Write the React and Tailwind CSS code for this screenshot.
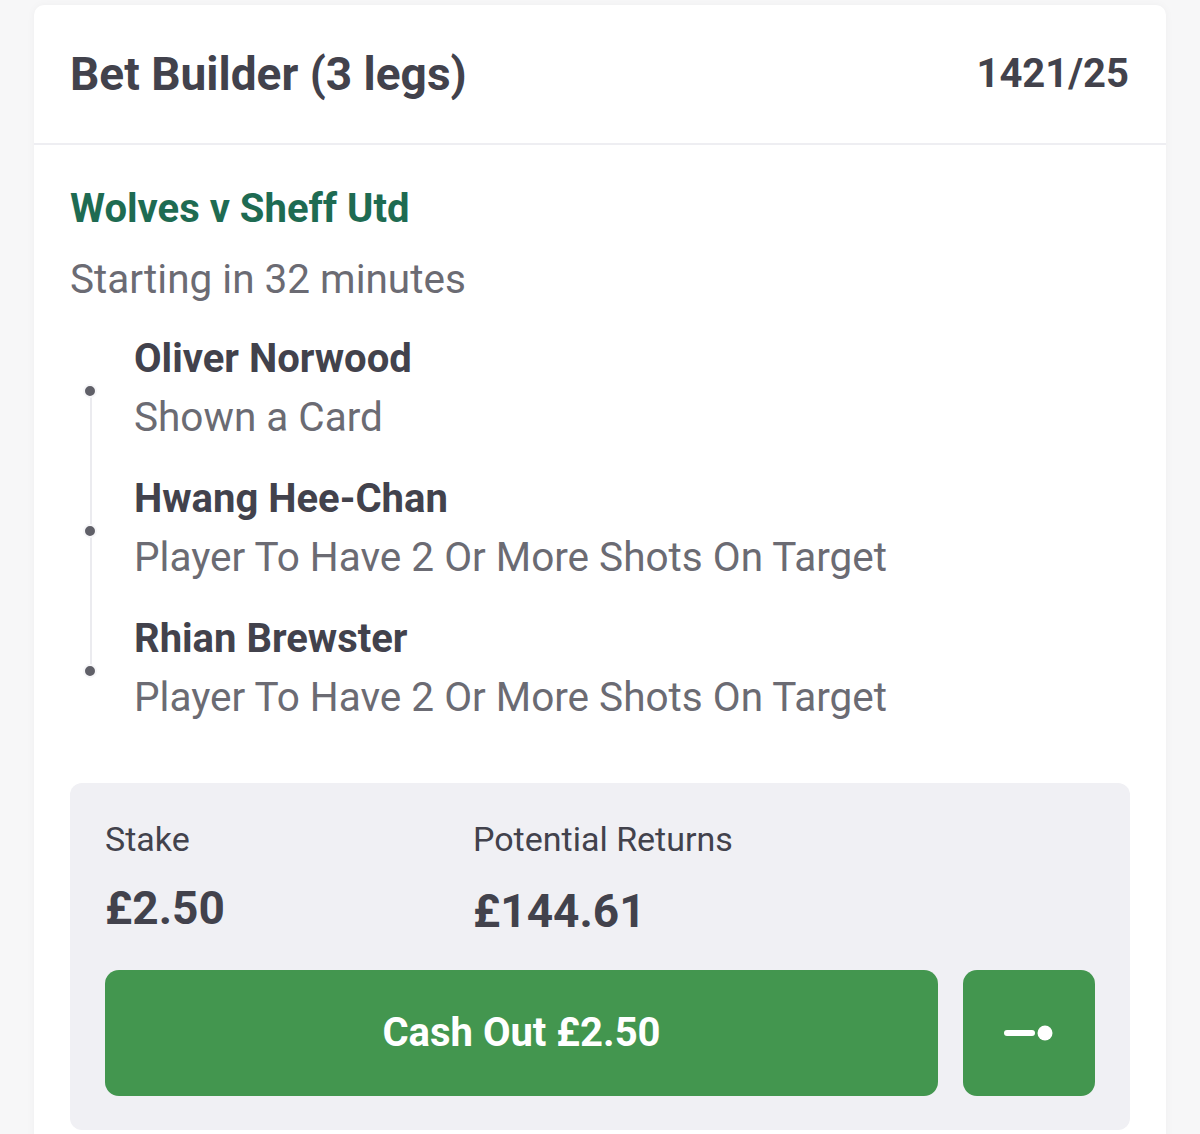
const legs = [
  { player: 'Oliver Norwood', market: 'Shown a Card' },
  { player: 'Hwang Hee-Chan', market: 'Player To Have 2 Or More Shots On Target' },
  { player: 'Rhian Brewster', market: 'Player To Have 2 Or More Shots On Target' },
];

const CashOutIcon = () => (
  <svg width="52" height="20" viewBox="0 0 52 20" fill="none">
    <line x1="4" y1="10" x2="29" y2="10" stroke="white" strokeWidth="6" strokeLinecap="round" />
    <circle cx="42" cy="10" r="7.5" fill="white" />
  </svg>
);

export default function App() {
  return (
    <div className="min-h-[1134px] bg-[#f7f7f8] px-[34px] pt-[5px] font-['Roboto',sans-serif] text-[#42424c]">
      <div className="rounded-t-[10px] bg-white shadow-[0_0_8px_rgba(0,0,0,0.04)]">
        {/* header */}
        <div className="flex h-[140px] items-center justify-between border-b-2 border-[#eeeef2] pl-[36px] pr-[37px]">
          <h1 className="text-[46px] font-bold leading-none">Bet Builder (3 legs)</h1>
          <span className="text-[40px] font-bold leading-none">1421/25</span>
        </div>

        <div className="px-[36px] pt-[39px] pb-[20px]">
          <p className="text-[40px] font-bold leading-[50px] text-[#1e6b52]">Wolves v Sheff Utd</p>
          <p className="mt-[20px] text-[40.5px] leading-[50px] text-[#6b6b73]">Starting in 32 minutes</p>

          {/* legs */}
          <div className="relative mt-[26px] flex flex-col gap-[24px] pl-[64px]">
            <div className="absolute left-[20px] top-[61px] bottom-[57px] w-[2px] bg-[#ebebef]" />
            {legs.map((leg) => (
              <div key={leg.player} className="relative">
                <span className="absolute left-[-51px] top-[54px] h-[14px] w-[14px] rounded-full border-[2.5px] border-[#f7f7f9] bg-[#606068]" />
                <p className="text-[40px] font-bold leading-[58px]">{leg.player}</p>
                <p className="text-[40.5px] leading-[58px] text-[#6b6b73]">{leg.market}</p>
              </div>
            ))}
          </div>

          {/* stake box */}
          <div className="mt-[57px] rounded-[12px] bg-[#f0f0f4] px-[35px] pt-[36px] pb-[34px]">
            <div className="flex">
              <div className="w-[368px]">
                <p className="text-[34px] leading-[40px]">Stake</p>
                <p className="mt-[24px] text-[46px] font-bold leading-[50px]">£2.50</p>
              </div>
              <div>
                <p className="text-[34px] leading-[40px]">Potential Returns</p>
                <p className="mt-[27px] text-[46px] font-bold leading-[50px]">£144.61</p>
              </div>
            </div>
            <div className="mt-[34px] flex gap-[25px]">
              <button className="flex h-[126px] flex-1 items-center justify-center rounded-[14px] bg-[#43964f] text-[40px] font-bold text-white">
                Cash Out £2.50
              </button>
              <button className="flex h-[126px] w-[132px] items-center justify-center rounded-[14px] bg-[#43964f]">
                <CashOutIcon />
              </button>
            </div>
          </div>
        </div>
      </div>
    </div>
  );
}
